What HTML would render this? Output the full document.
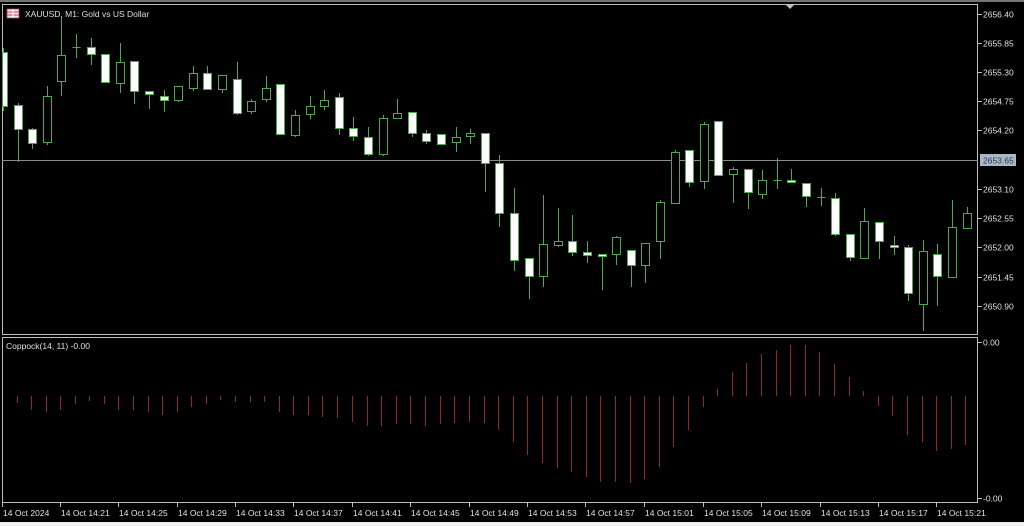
<!DOCTYPE html>
<html><head><meta charset="utf-8"><style>
html,body{margin:0;padding:0;background:#000;width:1024px;height:526px;overflow:hidden}
svg{display:block}
text{font-family:"Liberation Sans",sans-serif;font-size:8.5px;fill:#e0e0e0}
</style></head><body>
<svg id="s" width="1024" height="526" viewBox="0 0 1024 526">
<rect width="1024" height="526" fill="#000"/>
<line x1="0" y1="1" x2="1024" y2="1" stroke="#9a9a9a" stroke-width="1.5"/>
<rect x="2.5" y="4.5" width="975" height="330" fill="none" stroke="#bdbdbd"/>
<polygon points="786,5 794,5 790,9" fill="#bdbdbd"/>
<rect x="2.5" y="337.5" width="975" height="165" fill="none" stroke="#bdbdbd"/>
<line x1="2" y1="160.5" x2="978" y2="160.5" stroke="#8a8a8a"/>
<g id="c"></g>
<g id="h"></g>
<rect x="7" y="9" width="12" height="9" fill="#e8e8ff" stroke="#c04040" stroke-width="0.8"/>
<line x1="7" y1="12" x2="19" y2="12" stroke="#d04040"/><line x1="7" y1="15" x2="19" y2="15" stroke="#d04040"/>
<line x1="13" y1="9" x2="13" y2="18" stroke="#ffffff"/>
<text x="25" y="17">XAUUSD, M1:  Gold vs US Dollar</text>
<text x="6" y="349">Coppock(14, 11) -0.00</text>
<g stroke="#bdbdbd">
<line x1="978" y1="14.5" x2="982" y2="14.5"/><line x1="978" y1="43.5" x2="982" y2="43.5"/>
<line x1="978" y1="72.5" x2="982" y2="72.5"/><line x1="978" y1="101.5" x2="982" y2="101.5"/>
<line x1="978" y1="130.5" x2="982" y2="130.5"/><line x1="978" y1="189.5" x2="982" y2="189.5"/>
<line x1="978" y1="218.5" x2="982" y2="218.5"/><line x1="978" y1="247.5" x2="982" y2="247.5"/>
<line x1="978" y1="277.5" x2="982" y2="277.5"/><line x1="978" y1="306.5" x2="982" y2="306.5"/>
<line x1="978" y1="342.5" x2="982" y2="342.5"/><line x1="978" y1="498.5" x2="982" y2="498.5"/>
</g>
<text x="983" y="17.5">2656.40</text><text x="983" y="46.5">2655.85</text>
<text x="983" y="75.5">2655.30</text><text x="983" y="104.5">2654.75</text>
<text x="983" y="133.5">2654.20</text>
<rect x="980" y="154" width="36" height="12" fill="#a8b8c8"/>
<text x="983" y="163.5" style="fill:#303840">2653.65</text>
<text x="983" y="192.5">2653.10</text><text x="983" y="221.5">2652.55</text>
<text x="983" y="250.5">2652.00</text><text x="983" y="280.5">2651.45</text>
<text x="983" y="309.5">2650.90</text>
<text x="983" y="345.5">0.00</text><text x="983" y="501.5">-0.00</text>
<g id="t" stroke="#bdbdbd"></g>
<text x="3" y="516">14 Oct 2024</text>
<text x="61" y="516">14 Oct 14:21</text><text x="119" y="516">14 Oct 14:25</text>
<text x="178" y="516">14 Oct 14:29</text><text x="236" y="516">14 Oct 14:33</text>
<text x="294" y="516">14 Oct 14:37</text><text x="353" y="516">14 Oct 14:41</text>
<text x="411" y="516">14 Oct 14:45</text><text x="470" y="516">14 Oct 14:49</text>
<text x="528" y="516">14 Oct 14:53</text><text x="586" y="516">14 Oct 14:57</text>
<text x="645" y="516">14 Oct 15:01</text><text x="704" y="516">14 Oct 15:05</text>
<text x="762" y="516">14 Oct 15:09</text><text x="821" y="516">14 Oct 15:13</text>
<text x="879" y="516">14 Oct 15:17</text><text x="937" y="516">14 Oct 15:21</text>
<rect x="0" y="522" width="1024" height="4" fill="#f0f0f0"/>
</svg>
<script>
var NS="http://www.w3.org/2000/svg";
function el(p,n,a){var e=document.createElementNS(NS,n);for(var k in a)e.setAttribute(k,a[k]);p.appendChild(e);return e;}
var d=[
[0,'w',52,106,48,110],[1,'w',105,129,103,161],[2,'w',129,143,128,148],[3,'h',96,142,86,144],
[4,'h',55,81,17,95],[5,'c',47,47,34,57],[6,'w',47,54,38,64],[7,'w',54,82,54,82],
[8,'h',62,83,43,92],[9,'w',61,91,61,103],[10,'w',91,94,91,108],[11,'w',96,100,90,111],
[12,'h',86,100,86,101],[13,'h',73,88,66,90],[14,'w',73,89,66,89],[15,'h',75,89,75,92],
[16,'w',79,113,62,114],[17,'h',101,111,99,113],[18,'h',88,99,76,101],[19,'w',84,134,84,134],
[20,'h',115,135,110,136],[21,'h',106,114,96,118],[22,'h',100,106,90,109],[23,'w',97,128,93,134],
[24,'w',128,136,117,140],[25,'w',137,154,127,155],[26,'h',118,154,115,155],[27,'h',113,118,99,118],
[28,'w',112,133,112,136],[29,'w',133,141,130,143],[30,'w',134,144,134,144],[31,'h',137,142,127,151],
[32,'h',133,136,129,143],[33,'w',133,163,133,191],[34,'w',163,213,155,226],[35,'w',213,260,188,270],
[36,'w',258,276,258,298],[37,'h',244,276,195,286],[38,'h',241,245,208,246],[39,'w',241,252,215,255],
[40,'w',252,255,241,262],[41,'w',254,256,254,289],[42,'h',237,254,236,264],[43,'w',250,265,250,286],
[44,'h',243,265,243,282],[45,'h',202,241,200,258],[46,'h',152,203,150,203],[47,'w',150,182,150,186],
[48,'h',124,181,122,188],[49,'w',121,175,121,175],[50,'h',169,174,167,202],[51,'w',169,192,169,208],
[52,'h',180,194,170,198],[53,'c',180,180,158,188],[54,'w',180,181,169,182],[55,'w',183,196,183,206],
[56,'c',197,197,188,205],[57,'w',198,234,193,235],[58,'w',234,257,234,260],[59,'h',221,258,208,258],
[60,'w',222,241,222,258],[61,'w',245,246,236,254],[62,'w',247,293,245,300],[63,'h',251,304,240,330],
[64,'w',254,276,244,305],[65,'h',227,277,200,277],[66,'h',213,228,207,228]];
var g=document.getElementById('c'),G='#4caa4c';
d.forEach(function(c){var x=Math.round(3+14.6*c[0])+0.5;
 el(g,'line',{x1:x,y1:c[4],x2:x,y2:c[5]+1,stroke:G});
 if(c[1]=='c'){el(g,'line',{x1:x-4,y1:c[2]+0.5,x2:x+4,y2:c[2]+0.5,stroke:G});return;}
 var h=Math.max(c[3]-c[2],2);
 el(g,'rect',{x:Math.max(x-4,2.5),y:c[2]+0.5,width:(x-4<2.5?x+4-2.5:8),height:h,stroke:G,fill:c[1]=='w'?'#fff':'#000'});
});
var hb=[[17,403],[31,410],[46,412],[60,410],[75,404],[89,401],[104,404],[118,410],[133,410],[148,412],[162,415],[177,412],[191,407],[206,404],[220,400],[235,402],[250,402],[264,402],[279,412],[293,415],[308,415],[322,417],
[337,418],[352,422],[367,426],[381,426],[396,424],[410,424],[425,426],[440,424],[454,423],[469,422],[484,423],[498,430],[513,442],[527,455],[542,463],[557,468],[571,472],[586,477],[600,482],[615,482],[630,483],[644,479],[659,467],[673,447],[688,430],[703,407],[717,389],[732,372],[746,363],[761,354],[776,350],[790,345],[805,345],[819,352],[834,364],[849,377],[863,391],[878,406],[892,416],[907,435],[922,442],[936,451],[951,449],[965,445]];
var hg=document.getElementById('h');
hb.forEach(function(b){var x=b[0]+0.5;el(hg,'line',{x1:x,y1:396,x2:x,y2:b[1],stroke:'#962626'});});
var tg=document.getElementById('t');
[2,60,118,177,235,293,352,410,469,527,585,644,703,761,820,878,936].forEach(function(x){el(tg,'line',{x1:x+0.5,y1:503,x2:x+0.5,y2:507});});
</script>
</body></html>
